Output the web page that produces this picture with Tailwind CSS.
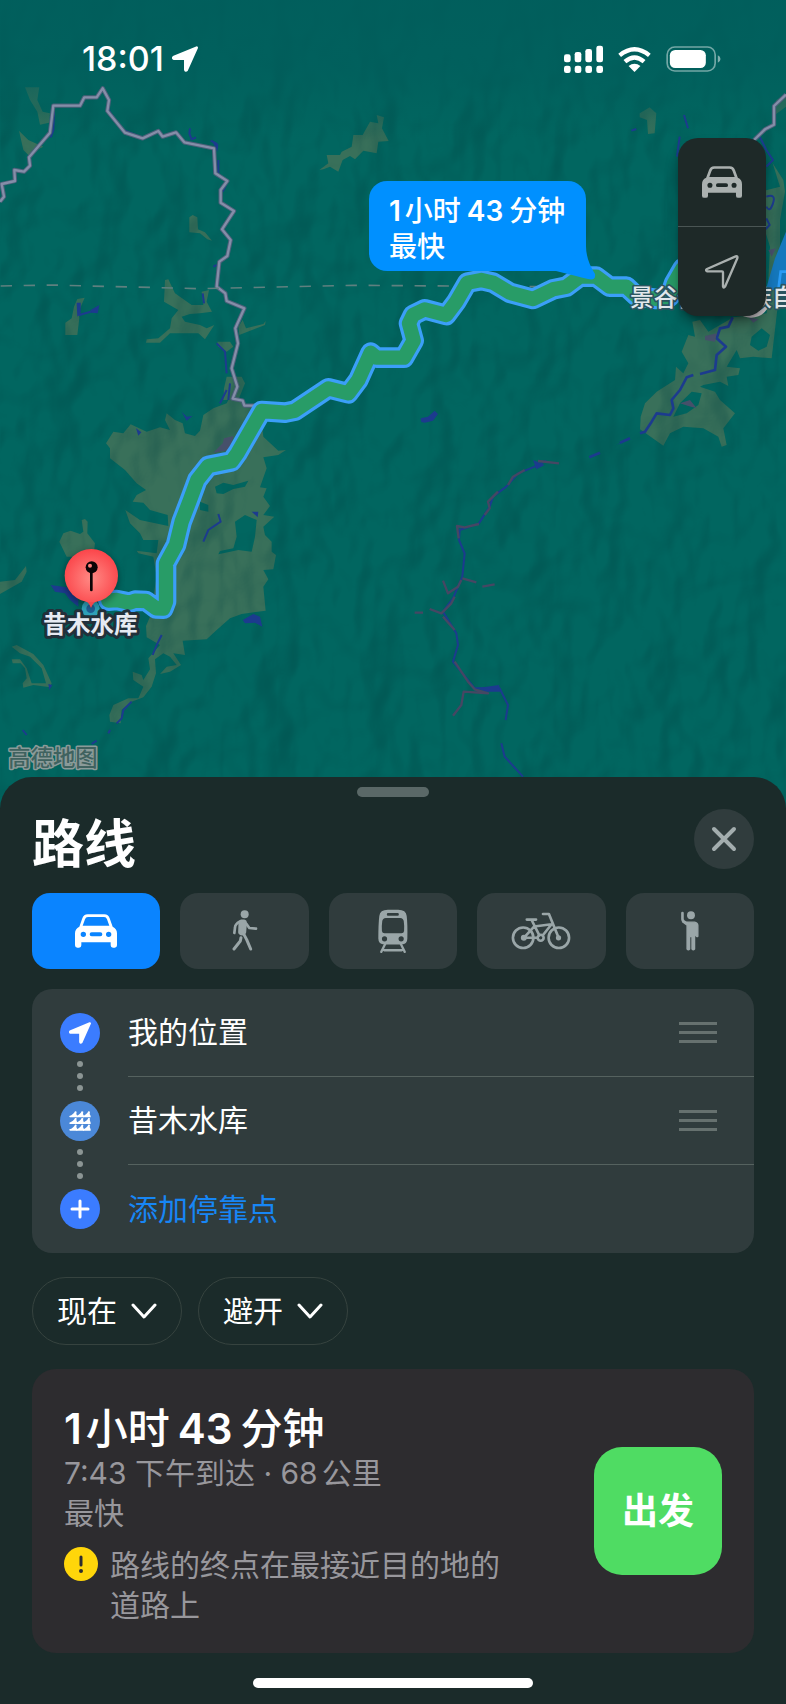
<!DOCTYPE html>
<html lang="zh-CN">
<head>
<meta charset="utf-8">
<meta name="viewport" content="width=device-width, initial-scale=1">
<title>路线</title>
<script src="https://cdn.jsdelivr.net/npm/@tailwindcss/browser@4"></script>
</head>
<body class="bg-[#1b2b2a] font-['Inter','Noto_Sans_CJK_SC',sans-serif] text-white">

<svg class="hidden" aria-hidden="true">
  <symbol id="car" viewBox="0 0 126 100">
    <path fill-rule="evenodd" fill="currentColor" d="M38 0H88Q100 0 104 12L113 37Q126 43 126 57V93Q126 100 119 100H114Q107 100 107 93V84H19V93Q19 100 12 100H7Q0 100 0 93V57Q0 43 13 37L22 12Q26 0 38 0ZM39 8Q32 8 30 15L23 34H103L96 15Q94 8 87 8ZM25 52a8 8 0 1 0 0 16a8 8 0 1 0 0-16ZM101 52a8 8 0 1 0 0 16a8 8 0 1 0 0-16ZM50 54a6 6 0 0 0 0 12H76a6 6 0 0 0 0-12Z"/>
  </symbol>
  <symbol id="arrow" viewBox="0 0 78 76">
    <path fill="currentColor" stroke="currentColor" stroke-width="8" stroke-linejoin="round" d="M74 4L44 71Q41 74 40 70V39Q40 37 38 37L5 37Q2 34 6 32Z"/>
  </symbol>
</svg>

<main class="flex min-h-screen flex-col">
  <section class="relative h-[808px] overflow-hidden bg-[#016560]" aria-label="地图">
    <svg class="absolute inset-0 h-full w-full" viewBox="0 0 2358 2424" preserveAspectRatio="xMidYMin slice" aria-hidden="true">
      <defs>
        <filter id="relief" x="0" y="0" width="100%" height="100%" color-interpolation-filters="sRGB">
          <feTurbulence type="fractalNoise" baseFrequency="0.006 0.004" numOctaves="3" seed="11"/>
          <feDiffuseLighting surfaceScale="90" diffuseConstant="1" lighting-color="#fff"><feDistantLight azimuth="215" elevation="60"/></feDiffuseLighting>
          <feColorMatrix values="0 0 0 0 0  0 0 0 0 0.25  0 0 0 0 0.25  -0.35 0 0 0 0.33"/>
        </filter>
        <filter id="soft"><feGaussianBlur stdDeviation="9"/></filter>
        <radialGradient id="pinFill" cx="0.5" cy="0.55" r="0.55"><stop offset="0" stop-color="#ff8a85"/><stop offset="1" stop-color="#fb454a"/></radialGradient>
        <linearGradient id="topShade" x2="0" y2="1"><stop offset="0" stop-color="#015e5c" stop-opacity="0.9"/><stop offset="0.5" stop-color="#015e5c" stop-opacity="0.7"/><stop offset="1" stop-color="#01605c" stop-opacity="0"/></linearGradient>
      </defs>
      <rect width="2358" height="2424" fill="#016660"/>

      <!-- farmland -->
      <g fill="#39705a">
        <path d="M75 262L118 262L112 300L128 335L150 340L147 368L120 374L112 335L90 300Z"/>
        <path d="M57 392L85 420L130 440L100 455L88 468L70 450Z"/>
        <path d="M568 652L578 645L592 652L594 688L615 697L636 722L622 718L600 700L568 697Z"/>
        <path d="M958 510L985 490L980 465L1020 465L1025 455L1055 440L1060 405L1088 405L1110 365L1135 370L1130 345L1152 352L1146 385L1166 423L1135 425L1130 460L1090 452L1065 478L1050 468L1028 480L1015 515L990 500L970 508Z"/>
        <path d="M495 840L505 838L525 880L575 915L610 915L605 875L627 870L620 905L636 935L600 940L570 942L545 950L555 965L600 975L620 985L643 975L615 1018L595 1000L540 1000L510 1000L480 1028L438 1028L440 1018L475 1015L510 985L515 955L535 930L492 905Z"/>
        <path d="M232 897L254 893L236 935L238 955L232 1005H196V968L215 955L222 920Z"/>
        <path d="M728 960L738 985L790 972L797 963L795 975L735 998L718 1005L715 980Z"/>
        <path d="M652 1025L690 1025L700 1040L680 1055L655 1040Z"/>
        <path d="M680 1130H725L735 1150L715 1200L670 1200L672 1165Z"/>
        <path transform="translate(0 1170)" d="M340 125L370 130L392 103L440 125L480 112L510 120L495 90L500 70L525 90L548 100L555 130L585 138L600 122L610 75L640 55L680 40L690 20L735 40L780 60L790 140L835 182L858 180L835 195L790 202L800 235L780 292L800 295L790 320L810 348L790 375L823 380L790 410L795 435L815 455L815 485L828 495L820 538L790 540L805 568L790 590L797 662L725 672L690 685L650 720L620 748L548 752L555 795L520 790L543 825L510 845L480 852L500 830L530 825L510 800L490 790L465 808L468 850L455 890L430 922L395 935L365 960L362 1000L330 995L328 975L340 945L385 925L415 925L430 890L400 870L398 845L425 855L430 870L450 838L445 805L480 765L440 742L438 708L450 680L470 560L460 500L415 490L410 482L470 490L475 450L430 450L420 430L390 400L376 360L420 390L505 408L503 375L450 360L430 338L398 335L410 315L438 300L410 280L375 240L330 205L330 175L318 160Z"/>
        <path transform="translate(0 1170)" d="M178 455L190 430L212 422L240 432L250 425L245 390L255 387L263 395L262 430L285 460L280 500H200Z"/>
        <path transform="translate(0 1170)" d="M0 575L45 570L78 528L80 545L65 575L0 612Z"/>
        <path transform="translate(0 1170)" d="M35 770L50 765L100 792L130 825L155 880L150 892L100 885L70 893L68 880L80 865L75 835L62 820L38 820L35 808L60 808L80 835L95 880L138 880L125 835L90 800L60 790Z"/>
        <path transform="translate(1179 0)" d="M740 340L770 322L790 340L785 400L765 402L762 360L740 352Z"/>
        <path transform="translate(1179 0)" d="M1179 282L1150 300L1145 345L1179 320Z"/>
        <path transform="translate(1860 240)" d="M458 250L490 300L495 335L480 420V620L455 835L400 830L360 835L350 810L320 860L360 865L355 885L320 890L325 918L300 905L250 915L240 920L285 935L300 960L345 1000L310 1045L320 1095L305 1100L295 1070L250 1045L190 1040L150 1060L130 1097L60 1048L62 1010L75 970L110 935L165 900L168 860L190 880L205 850L185 815L205 765L225 770L217 725L240 720L265 755L300 735L340 712L440 700L450 500L400 340L480 320Z"/>
      </g>
      <g fill="#016660">
        <path transform="translate(0 1170)" d="M645 290L670 278L700 285L745 272L735 290L700 297L670 312L650 310ZM705 395L735 375L770 390L765 440L755 485L715 480L655 493L660 483L700 475L710 440ZM600 335L625 345L625 365L600 360Z"/>
        <path transform="translate(1860 240)" d="M395 770L425 745L450 765L440 800L415 812L390 795ZM215 935L180 970L160 1010L200 1000L235 975L245 940Z"/>
      </g>

      <rect width="2358" height="2424" filter="url(#relief)"/>
      <rect width="2358" height="420" fill="url(#topShade)"/>

      <!-- rivers and reservoirs -->
      <g fill="none" stroke="#1c3b8e" stroke-width="6" stroke-linejoin="round">
        <path d="M152 412L160 390L162 335M325 300L328 335L370 390L425 412M570 385L568 400L575 418L588 412M632 422L648 430L652 445M655 480L655 520M680 550L668 575M640 800L650 795M608 880L612 910M235 910L238 945L290 930M650 1030L675 1055L680 1120M690 1150L685 1200"/>
        <path transform="translate(0 1170)" d="M655 372L662 395L625 420L610 455M485 735L470 765L458 795M395 935L370 960L365 985L350 1000M325 1030L330 1020M68 1020L80 1035M275 1062L290 1052M680 0L660 40"/>
        <path transform="translate(1179 0)" d="M873 345L885 385M715 392L730 387M860 410L852 470M1100 410L1120 450L1140 480L1120 500M1120 590Q1150 580 1140 610Q1130 640 1120 620M1120 655L1130 675L1115 690"/>
        <path transform="translate(1860 240)" stroke-width="8" d="M338 712L325 740L300 745L290 775L318 800L290 825L285 870L240 882M220 885L200 892L180 930L155 960L160 985L150 1005L110 1000L95 1025L75 1055L60 1060M30 1075L0 1088M-60 1118L-92 1132"/>
        <path transform="translate(1179 1170)" d="M460 212L425 230L375 250L340 290L300 320L290 350L258 400L200 420L198 450L215 490L208 560L180 625L150 665L190 730L195 765L180 815L245 895L320 895L345 945L338 990M325 1060L335 1100L390 1160"/>
      </g>
      <g fill="#1c3b8e">
        <path d="M272 930L298 915L293 940L275 938ZM230 908H242V940L232 950ZM635 420L655 432L652 455Z"/>
        <path transform="translate(0 1170)" d="M152 585L200 592L235 630L235 650L210 630L195 610L165 605ZM545 65L560 80L577 78L560 92ZM408 115L424 127L415 137ZM755 365L775 365L773 382ZM728 690L760 672L780 680L787 710L765 698L735 700ZM145 882L157 885L148 900Z"/>
        <path transform="translate(1179 1170)" d="M83 85L105 80L125 62L135 72L120 92L95 98L85 96ZM420 210L455 225L430 238ZM250 895L318 885L322 905L280 905ZM670 165L710 142L700 152Z"/>
      </g>
      <!-- built-up strips -->
      <g transform="translate(1179 1170)" fill="none" stroke="#464763" stroke-width="7" stroke-linejoin="round">
        <path d="M498 220L435 213M395 240L360 260L345 285M315 305L285 335L290 355L275 375M258 402L215 412L192 408L197 445M208 565L250 577M268 590L305 583M205 570L195 590L165 610L150 572M185 620L175 640L145 670L110 657M65 668H90M150 680L185 720M185 815L225 875L245 898L285 910L212 905L205 945L180 977"/>
      </g>
      <g fill="#46506a">
        <path d="M640 1358L668 1330L672 1315L700 1308L690 1350Z"/>
        <path transform="translate(1860 240)" d="M180 970L210 960L230 985L205 978ZM255 768L290 760L285 785L255 780ZM385 712L415 718L400 728ZM445 510L468 505L455 530Z"/>
      </g>

      <path d="M2300 860L2325 775L2358 695V870H2300Z" fill="#1578bd"/>
      <path d="M2335 870L2342 815H2358" fill="none" stroke="#2a9bf5" stroke-width="8"/>

      <!-- county border -->
      <g fill="none" stroke-linejoin="round">
        <path stroke="#4d607a" stroke-width="13" d="M0 605L12 590L5 552L45 543L43 510L72 515L90 497L87 472L150 398L160 317H240L253 292H290L308 265L327 300L322 333L375 398L428 415L475 393L488 410L528 397L553 427L642 445L646 520L682 543L662 570V608L702 633L666 688L692 720L682 768L658 785L650 860L676 880L680 903L733 925L706 985L714 1030L695 1105L712 1160L698 1196L728 1202L733 1217H785M2262 420L2295 388L2322 374V318L2358 284"/>
        <path stroke="#858ea8" stroke-width="7" d="M0 605L12 590L5 552L45 543L43 510L72 515L90 497L87 472L150 398L160 317H240L253 292H290L308 265L327 300L322 333L375 398L428 415L475 393L488 410L528 397L553 427L642 445L646 520L682 543L662 570V608L702 633L666 688L692 720L682 768L658 785L650 860L676 880L680 903L733 925L706 985L714 1030L695 1105L712 1160L698 1196L728 1202L733 1217H785M2262 420L2295 388L2322 374V318L2358 284"/>
        <path stroke="#5f807f" stroke-width="5" stroke-dasharray="34 35" d="M2 858L150 855L600 866L1060 856L1610 860"/>
      </g>

      <!-- route -->
      <g fill="none" stroke-linejoin="round" stroke-linecap="round">
        <path stroke="#3b9ff8" stroke-width="62" d="M325 1802L350 1800L388 1808L405 1802L438 1803L468 1825L490 1826L498 1805V1690L528 1635L545 1565L570 1500L592 1440L625 1398L695 1384L712 1360L785 1233L855 1238L885 1232L985 1165L1045 1180L1075 1140L1112 1058L1130 1073H1212L1241 1022L1227 970L1239 945L1274 928L1339 945L1369 905L1402 848L1444 840L1479 848L1529 878L1599 897L1659 868L1699 860L1739 830H1789L1829 860H1879L1909 888L1969 897L2009 890L2022 850L2048 805"/>
        <path stroke="#289c67" stroke-width="43" d="M325 1802L350 1800L388 1808L405 1802L438 1803L468 1825L490 1826L498 1805V1690L528 1635L545 1565L570 1500L592 1440L625 1398L695 1384L712 1360L785 1233L855 1238L885 1232L985 1165L1045 1180L1075 1140L1112 1058L1130 1073H1212L1241 1022L1227 970L1239 945L1274 928L1339 945L1369 905L1402 848L1444 840L1479 848L1529 878L1599 897L1659 868L1699 860L1739 830H1789L1829 860H1879L1909 888L1969 897L2009 890L2022 850L2048 805"/>
      </g>
      <circle cx="272" cy="1826" r="20" fill="#1f5f93" stroke="#2fa0b8" stroke-width="14"/>

      <!-- destination pin -->
      <ellipse cx="274" cy="1735" rx="84" ry="84" fill="#000" opacity="0.3" filter="url(#soft)"/>
      <path d="M252 1800Q268 1808 273 1824Q278 1808 296 1800Z" fill="#f4474b"/>
      <circle cx="274" cy="1727" r="80" fill="url(#pinFill)"/>
      <path d="M274 1710V1770" stroke="#0c0406" stroke-width="8" stroke-linecap="round"/>
      <circle cx="275" cy="1702" r="18" fill="#0c0406"/>
      <circle cx="270" cy="1697" r="6" fill="#ff7f7c"/>

      <circle cx="2253" cy="895" r="58" fill="#d3cdd2"/>
      <g font-family="Noto Sans CJK SC, sans-serif" font-weight="700" stroke-linejoin="round" paint-order="stroke">
        <text x="129" y="1900" font-size="71" fill="#e6eaf2" stroke="#22303a" stroke-width="18">昔木水库</text>
        <text x="1890" y="917" font-size="71" font-weight="500" fill="#e3e8ec" stroke="#2b5560" stroke-width="10">景谷傣族彝族自治县</text>
        <text x="25" y="2298" font-size="67" font-weight="500" fill="#3f625f" stroke="#8b9b99" stroke-width="9">高德地图</text>
      </g>
    </svg>

    <header class="relative flex items-center justify-between pt-[35px] pr-[65px] pl-[82px]">
      <div class="flex items-center gap-2">
        <time class="text-[34px] leading-[48px] font-medium">18:01</time>
        <svg class="h-[26px] w-[26px]" aria-hidden="true"><use href="#arrow"/></svg>
      </div>
      <div class="flex items-center gap-[15px]">
        <svg class="h-7 w-[39px]" viewBox="0 0 117 84" fill="currentColor" aria-label="信号">
          <rect y="28" width="20" height="24" rx="7"/><rect x="32" y="21" width="20" height="31" rx="7"/><rect x="64" y="12" width="20" height="40" rx="7"/><rect x="97" y="2" width="20" height="50" rx="7"/>
          <rect y="62" width="20" height="22" rx="7"/><rect x="32" y="62" width="20" height="22" rx="7"/><rect x="64" y="62" width="20" height="22" rx="7"/><rect x="97" y="62" width="20" height="22" rx="7"/>
        </svg>
        <svg class="h-[25px] w-[33px]" viewBox="0 0 100 75" fill="none" stroke="currentColor" stroke-width="13" aria-label="无线网络">
          <path d="M5 25Q50 -12 95 25M21 44Q50 19 79 44"/><path fill="currentColor" stroke="none" d="M50 75L32 57Q50 43 68 57Z"/>
        </svg>
        <svg class="h-[26px] w-[55px]" viewBox="0 0 164 78" aria-label="电池">
          <rect x="3" y="3" width="144" height="72" rx="23" fill="none" stroke="#fff" stroke-opacity="0.45" stroke-width="5"/>
          <rect x="11" y="12" width="108" height="54" rx="16" fill="#fff"/><path d="M155 28Q163 32 163 39Q163 46 155 50Z" fill="#fff" fill-opacity="0.5"/>
        </svg>
      </div>
    </header>

    <button class="absolute top-[181px] left-[369px] h-[90px] w-[217px] rounded-[18px] bg-[#0090ff] px-5 pt-[6px] text-left">
      <svg class="absolute -right-[10px] -bottom-[9px] h-[34px] w-[40px]" viewBox="0 0 40 34" aria-hidden="true"><path fill="#0090ff" d="M30 0Q30 14 39 28Q40 35 32 33Q20 30 0 25Z"/></svg>
      <span class="relative block text-[28px] leading-9 font-medium whitespace-nowrap"><span class="mr-1 font-semibold">1</span>小时<span class="mx-[6px] font-semibold">43</span>分钟</span>
      <span class="relative block text-[28px] leading-9 font-medium">最快</span>
    </button>

    <div class="absolute top-[138px] right-5 flex w-[88px] flex-col divide-y divide-[#4a5554] overflow-hidden rounded-[20px] bg-[#1e2928] text-[#aab0af] shadow-lg shadow-black/40">
      <button class="flex h-[89px] items-center justify-center" aria-label="驾车地图"><svg class="h-8 w-10" aria-hidden="true"><use href="#car"/></svg></button>
      <button class="flex h-[89px] items-center justify-center" aria-label="定位">
        <svg class="h-[34px] w-[34px]" viewBox="0 0 102 102" fill="none" stroke="currentColor" stroke-width="7" stroke-linejoin="round" aria-hidden="true"><path d="M92 4Q99 2 97 10L60 95Q56 101 54 94V52Q54 49 51 49H7Q0 46 6 42Z"/></svg>
      </button>
    </div>
  </section>

  <section class="relative -mt-[31px] flex grow flex-col rounded-t-[32px] bg-[#1b2b2a] px-8 pt-[10px] pb-4" aria-labelledby="title">
    <div class="h-[10px] w-[72px] self-center rounded-full bg-[#5a6867]"></div>
    <div class="mt-3 flex items-start justify-between">
      <h1 id="title" class="text-[52px] leading-[72px] font-bold">路线</h1>
      <button class="flex h-[60px] w-[60px] items-center justify-center rounded-full bg-[#303c3d]" aria-label="关闭">
        <svg class="h-[26px] w-[26px]" viewBox="0 0 26 26" fill="none" stroke="#a3adae" stroke-width="4" stroke-linecap="round"><path d="M3 3L23 23M23 3L3 23"/></svg>
      </button>
    </div>

    <nav class="mt-3 grid grid-cols-5 gap-5 text-[#9aa6a8]" aria-label="出行方式">
      <button class="flex h-[76px] items-center justify-center rounded-[18px] bg-[#0a84ff] text-white" aria-label="驾车" aria-pressed="true"><svg class="h-[34px] w-[42px]"><use href="#car"/></svg></button>
      <button class="flex h-[76px] items-center justify-center rounded-[18px] bg-[#303c3d]" aria-label="步行">
        <svg class="h-[42px] w-[26px]" viewBox="695 419 78 126" fill="none" stroke="currentColor" stroke-linecap="round" stroke-linejoin="round" stroke-width="8">
          <circle cx="733" cy="432" r="12" fill="currentColor" stroke="none"/><path fill="currentColor" stroke-width="5" d="M722 450H731Q738 451 737 460L735 486Q733 493 726 493Q717 492 716 486L717 455Z"/><path d="M719 453Q704 461 704 472L702 488M738 460L747 473L767 475"/><path stroke-width="9" d="M728 487L739 508L751 536M722 502L720 512L701 536"/>
        </svg>
      </button>
      <button class="flex h-[76px] items-center justify-center rounded-[18px] bg-[#303c3d]" aria-label="公交">
        <svg class="h-[45px] w-[30px]" viewBox="98 56 92 135" fill="currentColor">
          <path fill-rule="evenodd" d="M128 57H160Q184 57 186 76Q189 100 188 145Q188 163 170 163H118Q99 163 99 145Q99 100 102 76Q104 57 128 57ZM129 67a4 4 0 0 0 0 8H158a4 4 0 0 0 0-8ZM122 82Q112 83 111 92Q109 105 110 122Q111 129 118 129H170Q177 129 178 122Q179 105 177 92Q176 83 166 82ZM118 138a8 8 0 1 0 0 16a8 8 0 1 0 0-16ZM169 138a8 8 0 1 0 0 16a8 8 0 1 0 0-16Z"/><path fill="none" stroke="currentColor" stroke-width="7" stroke-linecap="round" d="M120 162L108 186M168 162L180 186M117 181H171"/>
        </svg>
      </button>
      <button class="flex h-[76px] items-center justify-center rounded-[18px] bg-[#303c3d]" aria-label="骑行">
        <svg class="h-[38px] w-[60px]" viewBox="500 65 180 115" fill="none" stroke="currentColor" stroke-width="8" stroke-linecap="round" stroke-linejoin="round">
          <circle cx="536" cy="143" r="31"/><circle cx="644" cy="143" r="31"/><circle cx="589" cy="143" r="9"/><path d="M547 88H575M562 90L585 136M538 143L569 109L622 102L595 136M538 143H580M596 71H614L643 142"/><circle cx="538" cy="143" r="5" fill="currentColor"/><circle cx="643" cy="143" r="4" fill="currentColor"/>
        </svg>
      </button>
      <button class="flex h-[76px] items-center justify-center rounded-[18px] bg-[#303c3d]" aria-label="网约车">
        <svg class="h-10 w-5" viewBox="861 421 60 122" fill="currentColor" stroke="currentColor" stroke-linecap="round" stroke-linejoin="round">
          <circle cx="894" cy="434" r="12" stroke="none"/><path stroke-width="4" d="M882 455H905Q914 456 915 465V498Q912 501 909 496V470H905V537Q901 541 897 537V499H890V537Q886 541 882 537V464L868 454"/><path fill="none" stroke-width="8" d="M868 427V446Q868 453 882 458"/>
        </svg>
      </button>
    </nav>

    <ol class="mt-5 rounded-[20px] bg-[#303c3d] pl-7 text-[30px]">
      <li class="relative flex h-[88px] items-center gap-7">
        <span class="flex h-10 w-10 items-center justify-center rounded-full bg-[#3b7cff]"><svg class="h-[22px] w-[22px]"><use href="#arrow"/></svg></span>
        <span class="absolute top-[72px] left-[17px] flex flex-col gap-[6px]"><i class="h-[6px] w-[6px] rounded-full bg-[#8b9594]"></i><i class="h-[6px] w-[6px] rounded-full bg-[#8b9594]"></i><i class="h-[6px] w-[6px] rounded-full bg-[#8b9594]"></i></span>
        <div class="flex h-full grow items-center justify-between border-b border-[#55625f] pr-[37px]">
          <span>我的位置</span>
          <button class="flex w-[38px] flex-col gap-[6px]" aria-label="移动我的位置"><i class="h-[3px] bg-[#66716f]"></i><i class="h-[3px] bg-[#66716f]"></i><i class="h-[3px] bg-[#66716f]"></i></button>
        </div>
      </li>
      <li class="relative flex h-[88px] items-center gap-7">
        <span class="flex h-10 w-10 items-center justify-center rounded-full bg-[#4b88d8]">
          <svg class="h-5 w-[22px]" viewBox="0 0 66 60" fill="currentColor">
            <g id="waves"><path id="wave" d="M1 15Q14 11 18 1Q20 0 23 2Q20 8 25 15V19H3Q0 18 1 15Z"/><use href="#wave" x="20"/><use href="#wave" x="40"/></g><use href="#waves" y="20"/><use href="#waves" y="40"/>
          </svg>
        </span>
        <span class="absolute top-[72px] left-[17px] flex flex-col gap-[6px]"><i class="h-[6px] w-[6px] rounded-full bg-[#8b9594]"></i><i class="h-[6px] w-[6px] rounded-full bg-[#8b9594]"></i><i class="h-[6px] w-[6px] rounded-full bg-[#8b9594]"></i></span>
        <div class="flex h-full grow items-center justify-between border-b border-[#55625f] pr-[37px]">
          <span>昔木水库</span>
          <button class="flex w-[38px] flex-col gap-[6px]" aria-label="移动昔木水库"><i class="h-[3px] bg-[#66716f]"></i><i class="h-[3px] bg-[#66716f]"></i><i class="h-[3px] bg-[#66716f]"></i></button>
        </div>
      </li>
      <li>
        <button class="flex h-[88px] w-full items-center gap-7 text-[#1786f5]">
          <span class="flex h-10 w-10 items-center justify-center rounded-full bg-[#3b7cff]"><svg class="h-5 w-5" viewBox="0 0 20 20" stroke="#fff" stroke-width="3" stroke-linecap="round"><path d="M10 2V18M2 10H18"/></svg></span>
          添加停靠点
        </button>
      </li>
    </ol>

    <div class="mt-6 flex gap-4 text-[30px]">
      <button class="flex h-[68px] items-center gap-[14px] rounded-full border border-[#36433f] px-6" aria-haspopup="menu">现在<svg class="h-4 w-[26px]" viewBox="0 0 26 16" fill="none" stroke="currentColor" stroke-width="3" stroke-linecap="round" stroke-linejoin="round"><path d="M2 2L13 14L24 2"/></svg></button>
      <button class="flex h-[68px] items-center gap-[14px] rounded-full border border-[#36433f] px-6" aria-haspopup="menu">避开<svg class="h-4 w-[26px]" viewBox="0 0 26 16" fill="none" stroke="currentColor" stroke-width="3" stroke-linecap="round" stroke-linejoin="round"><path d="M2 2L13 14L24 2"/></svg></button>
    </div>

    <article class="mt-6 flex items-center justify-between gap-8 rounded-3xl bg-[#2d2c2f] px-8 py-7">
      <div class="pt-2 text-[30px] leading-10 text-[#98979c]">
        <h2 class="text-[42px] leading-[48px] font-medium text-white"><span class="mr-1 font-semibold">1</span>小时<span class="mx-2 font-semibold">43</span>分钟</h2>
        <p>7:43 下午到达 · 68<span class="ml-1">公里</span></p>
        <p>最快</p>
        <div class="mt-3 flex gap-3">
          <svg class="mt-[2px] h-[34px] w-[34px] shrink-0" viewBox="0 0 34 34" role="img" aria-label="注意"><circle cx="17" cy="17" r="17" fill="#ffd60a"/><path d="M17 10V18" stroke="#2d2c2f" stroke-width="3" stroke-linecap="round"/><circle cx="17" cy="24" r="2" fill="#2d2c2f"/></svg>
          <p>路线的终点在最接近目的地的<br>道路上</p>
        </div>
      </div>
      <button class="h-32 w-32 shrink-0 rounded-[28px] bg-[#4fdc63] text-[36px] font-bold">出发</button>
    </article>

    <div class="mt-auto h-[10px] w-[280px] self-center rounded-full bg-white"></div>
  </section>
</main>
</body>
</html>
